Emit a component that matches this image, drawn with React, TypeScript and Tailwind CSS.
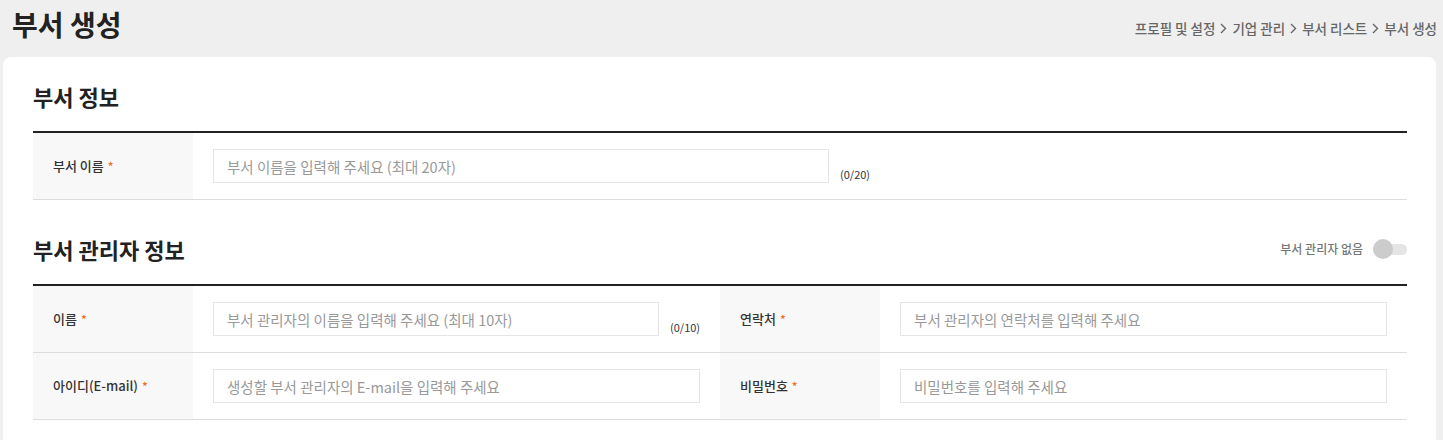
import { useState } from 'react'

const font = { fontFamily: '"Noto Sans CJK KR", "Noto Sans", sans-serif' }

function Label({ text }: { text: string }) {
  return (
    <div className="w-[160px] shrink-0 bg-[#f8f8f8] pl-[20px] flex items-center text-[13px] font-medium text-[#333]">
      {text}
      <span className="ml-[4px] text-[12px] text-[#f26d21]">*</span>
    </div>
  )
}

function Field({ placeholder, width, counter }: { placeholder: string; width?: string; counter?: string }) {
  return (
    <div className="flex-1 flex items-end px-[20px] py-[16px]">
      <input
        placeholder={placeholder}
        className={`${width ?? 'flex-1'} h-[34px] border border-[#e5e5e5] px-[13px] text-[14.5px] text-[#333] placeholder:text-[#999] outline-none`}
      />
      {counter && (
        <span className="ml-[11px] mb-[3px] text-[11px] leading-[11px] text-[#333]">{counter}</span>
      )}
    </div>
  )
}

function Chevron() {
  return (
    <svg width="7" height="11" viewBox="0 0 7 11" className="mx-[5px] inline-block">
      <path d="M1 1l4.5 4.5L1 10" fill="none" stroke="#666" strokeWidth="1.4" />
    </svg>
  )
}

export default function App() {
  const [noManager, setNoManager] = useState(false)

  return (
    <div className="min-h-[440px] bg-[#efefef] pl-[3px] pr-[7px]" style={font}>
      <div className="flex justify-between h-[57px]">
        <h1 className="pl-[9px] h-[49px] leading-[49px] text-[28px] font-bold text-[#222]">부서 생성</h1>
        <div className="pt-[18px] leading-[20px] text-[13.5px] font-medium text-[#666] flex items-center h-[38px] mr-[-1px]">
          프로필 및 설정<Chevron />기업 관리<Chevron />부서 리스트<Chevron />부서 생성
        </div>
      </div>

      <div className="bg-white rounded-t-[8px] pl-[30px] pr-[29px] pt-[24px] pb-[20px]">
        <h2 className="h-[30px] leading-[30px] text-[22px] font-bold text-[#222] mb-[20px]">부서 정보</h2>
        <div className="border-t-2 border-[#222]">
          <div className="flex border-b border-[#ddd]">
            <Label text="부서 이름" />
            <Field placeholder="부서 이름을 입력해 주세요 (최대 20자)" width="w-[616px]" counter="(0/20)" />
          </div>
        </div>

        <div className="flex justify-between items-center h-[30px] mt-[34px] mb-[20px]">
          <h2 className="leading-[30px] text-[22px] font-bold text-[#222]">부서 관리자 정보</h2>
          <div className="flex items-center">
            <span className="text-[12px] font-medium text-[#777] mr-[10px]">부서 관리자 없음</span>
            <button
              onClick={() => setNoManager(!noManager)}
              className="relative w-[34px] h-[20px] flex items-center"
            >
              <span className="absolute left-0 right-0 h-[11px] rounded-full bg-[#e5e5e5]" />
              <span
                className={`absolute w-[20px] h-[20px] rounded-full ${noManager ? 'left-[14px] bg-[#f26d21]' : 'left-0 bg-[#ccc]'}`}
              />
            </button>
          </div>
        </div>
        <div className="border-t-2 border-[#222]">
          <div className="flex border-b border-[#ddd]">
            <div className="flex flex-1">
              <Label text="이름" />
              <Field placeholder="부서 관리자의 이름을 입력해 주세요 (최대 10자)" width="w-[446px]" counter="(0/10)" />
            </div>
            <div className="flex flex-1">
              <Label text="연락처" />
              <Field placeholder="부서 관리자의 연락처를 입력해 주세요" />
            </div>
          </div>
          <div className="flex border-b border-[#ddd]">
            <div className="flex flex-1">
              <Label text="아이디(E-mail)" />
              <Field placeholder="생성할 부서 관리자의 E-mail을 입력해 주세요" />
            </div>
            <div className="flex flex-1">
              <Label text="비밀번호" />
              <Field placeholder="비밀번호를 입력해 주세요" />
            </div>
          </div>
        </div>
      </div>
    </div>
  )
}
